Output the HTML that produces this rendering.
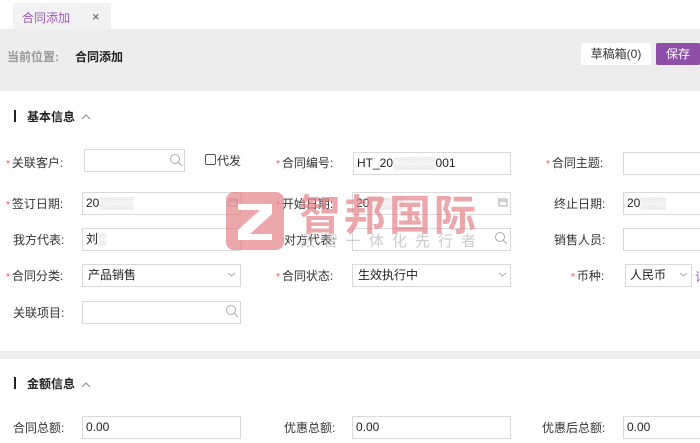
<!DOCTYPE html>
<html><head><meta charset="utf-8"><style>
*{margin:0;padding:0;box-sizing:border-box}
body{width:700px;height:443px;overflow:hidden;background:#fff;font-family:"Liberation Sans","Noto Sans CJK SC",sans-serif;font-size:12px;color:#333;position:relative}
.a{position:absolute;white-space:nowrap}
.in{position:absolute;height:23px;border:1px solid #d9d9d9;background:#fff;padding-left:3px;line-height:21px;font-size:12px;color:#222}
.st{color:#e55;font-size:10px;margin-right:2px}
.lb{position:absolute;line-height:16px}
svg{position:absolute}
</style></head><body>
<div class="a" style="left:13px;top:3px;width:98px;height:26px;background:#f2f2f2;border-radius:2px 2px 0 0"></div>
<div class="a" style="left:22px;top:9px;color:#9b59b6;font-size:12px">合同添加</div>
<div class="a" style="left:92px;top:9px;color:#555;font-size:13px">×</div>
<div class="a" style="left:0;top:29px;width:700px;height:62px;background:#ededed"></div>
<div class="a" style="left:7px;top:48px;color:#999;font-weight:bold">当前位置:</div>
<div class="a" style="left:75px;top:48px;color:#222;font-weight:bold">合同添加</div>
<div class="a" style="left:581px;top:43px;width:70px;height:22px;background:#fff;border-radius:2px;text-align:center;line-height:22px">草稿箱(0)</div>
<div class="a" style="left:656px;top:43px;width:44px;height:22px;background:#8e4fa8;border-radius:2px;color:#fff;text-align:center;line-height:22px">保存</div>
<div class="a" style="left:0;top:351px;width:700px;height:8px;background:#eee"></div>

<div class="a" style="left:14px;top:110px;width:2px;height:12px;background:#222"></div>
<div class="a" style="left:27px;top:108px;font-weight:bold;color:#222">基本信息</div>
<div class="a" style="left:14px;top:377px;width:2px;height:12px;background:#222"></div>
<div class="a" style="left:27px;top:375px;font-weight:bold;color:#222">金额信息</div>

<!-- row1 -->
<div class="lb" style="left:6px;top:155px"><span class="st">*</span>关联客户:</div>
<div class="in" style="left:84px;top:149px;width:101px"></div>
<div class="a" style="left:205px;top:154px;width:11px;height:11px;border:1px solid #555;border-radius:2px"></div>
<div class="a" style="left:217px;top:152px">代发</div>
<div class="lb" style="left:276px;top:155px"><span class="st">*</span>合同编号:</div>
<div class="in" style="left:353px;top:152px;width:158px">HT_20<span style="color:#ccc">▒▒▒▒▒</span>001</div>
<div class="lb" style="left:546px;top:155px"><span class="st">*</span>合同主题:</div>
<div class="in" style="left:623px;top:152px;width:90px"></div>
<!-- row2 -->
<div class="lb" style="left:6px;top:196px"><span class="st">*</span>签订日期:</div>
<div class="in" style="left:82px;top:192px;width:159px">20<span style="color:#ccc">▒▒▒▒</span></div>
<div class="lb" style="left:276px;top:196px"><span class="st">*</span>开始日期:</div>
<div class="in" style="left:352px;top:192px;width:159px">20<span style="color:#ccc">▒▒▒▒</span></div>
<div class="lb" style="left:554px;top:196px">终止日期:</div>
<div class="in" style="left:623px;top:192px;width:90px">20<span style="color:#ccc">▒▒▒</span></div>
<!-- row3 -->
<div class="lb" style="left:13px;top:232px">我方代表:</div>
<div class="in" style="left:82px;top:228px;width:159px">刘<span style="color:#ccc">▒</span></div>
<div class="lb" style="left:284px;top:232px">对方代表:</div>
<div class="in" style="left:352px;top:228px;width:159px"></div>
<div class="lb" style="left:554px;top:232px">销售人员:</div>
<div class="in" style="left:623px;top:228px;width:90px"></div>
<!-- row4 -->
<div class="lb" style="left:6px;top:268px"><span class="st">*</span>合同分类:</div>
<div class="in" style="left:82px;top:264px;width:159px;padding-left:5px">产品销售</div>
<div class="lb" style="left:276px;top:268px"><span class="st">*</span>合同状态:</div>
<div class="in" style="left:352px;top:264px;width:159px;padding-left:5px">生效执行中</div>
<div class="lb" style="left:571px;top:268px"><span class="st">*</span>币种:</div>
<div class="in" style="left:625px;top:264px;width:67px;padding-left:4px">人民币</div>
<div class="a" style="left:695px;top:268px;color:#9b59b6">记</div>
<!-- row5 -->
<div class="lb" style="left:13px;top:305px">关联项目:</div>
<div class="in" style="left:82px;top:301px;width:159px"></div>
<!-- amounts -->
<div class="lb" style="left:13px;top:420px">合同总额:</div>
<div class="in" style="left:82px;top:416px;width:159px">0.00</div>
<div class="lb" style="left:284px;top:420px">优惠总额:</div>
<div class="in" style="left:352px;top:416px;width:159px">0.00</div>
<div class="lb" style="left:542px;top:420px">优惠后总额:</div>
<div class="in" style="left:623px;top:416px;width:90px">0.00</div>

<!-- icons -->
<svg width="700" height="443" style="left:0;top:0" fill="none" stroke="#aaa" stroke-width="1">
<circle cx="175" cy="159" r="4.5"/><line x1="178" y1="162" x2="182" y2="166"/>
<circle cx="500" cy="237" r="4.5"/><line x1="503" y1="240" x2="507" y2="244"/>
<circle cx="231" cy="310" r="4.5"/><line x1="234" y1="313" x2="238" y2="317"/>
<rect x="229" y="199" width="8" height="7"/><line x1="229" y1="201" x2="237" y2="201"/>
<rect x="499" y="199" width="8" height="7"/><line x1="499" y1="201" x2="507" y2="201"/>
<path d="M228 273l3.5 3 3.5-3M499 273l3.5 3 3.5-3M680 273l3.5 3 3.5-3"/>
<path d="M82 119l4-4 4 4M82 387l4-4 4 4" stroke="#888"/>
</svg>
<!-- watermark -->
<div class="a" style="left:226px;top:192px;width:58px;height:58px;background:rgba(228,130,136,.7);border-radius:8px"></div>
<svg width="58" height="58" style="left:226px;top:192px"><path d="M12 12H46V22L24 42H46V48H12V38L34 18H12Z" fill="#fff"/></svg>
<div class="a" style="left:299px;top:182px;font-size:42px;font-weight:bold;color:rgba(228,130,136,.7);letter-spacing:3px">智邦国际</div>
<div class="a" style="left:300px;top:230px;font-size:15px;color:rgba(170,170,170,.6);letter-spacing:8px">数智一体化先行者</div>
</body></html>
